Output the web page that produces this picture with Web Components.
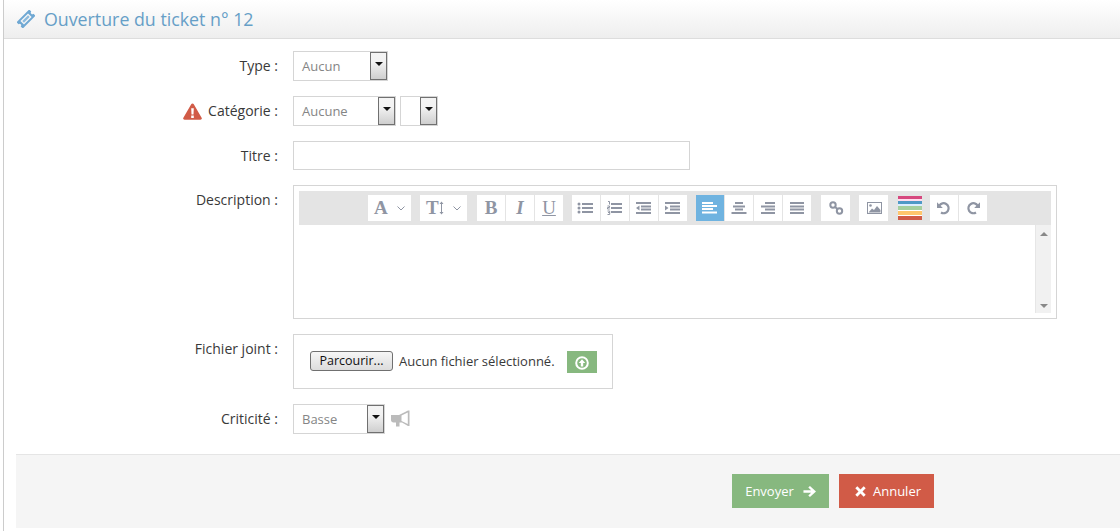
<!DOCTYPE html>
<html lang="fr">
<head>
<meta charset="utf-8">
<title>Ouverture du ticket</title>
<style>
  html, body { margin: 0; background: #fff; }
  body { font-family: "Open Sans", "Liberation Sans", sans-serif; font-size: 14px; color: #393939; }
</style>
</head>
<body>
<ticket-page>
  <page-title slot="title">Ouverture du ticket n° 12</page-title>

  <form-row label="Type :"><select-box width="95" text="Aucun"></select-box></form-row>
  <form-row label="Catégorie :" warn>
    <select-box width="103" text="Aucune"></select-box>
    <select-box width="38"></select-box>
  </form-row>
  <form-row label="Titre :"><text-input></text-input></form-row>
  <form-row label="Description :"><rich-editor></rich-editor></form-row>
  <form-row label="Fichier joint :"><file-box></file-box></form-row>
  <form-row label="Criticité :">
    <select-box width="92" text="Basse"></select-box>
    <svg style="margin:6px 0 0 2px" width="19" height="17" viewBox="0 0 19 17"><path fill="#bbb" fill-rule="evenodd" d="M0 5h8L17 .5h1.500V16H17L11 12.500H8.500V16.500H5V12.500H2.500C1 12.500 0 11.500 0 10zM10.500 5.500v5.500L16.800 14V2.500z"/></svg>
  </form-row>

  <form-actions slot="actions">
    <action-btn color="#87b87f" width="97" style="gap:9px">Envoyer <svg slot="after" width="13" height="13" viewBox="0 0 14 13"><path fill="#fff" d="M7.500.500 14 6.500l-6.500 6-1.800-1.800 3.100-2.900H.500V5.200h8.300L5.700 2.300z"/></svg></action-btn>
    <action-btn color="#d15b47" width="95" style="padding-left:3px"><svg slot="before" width="11" height="11" viewBox="0 0 11 11"><path fill="#fff" d="M2.300.300 5.500 3.500 8.700.300l2 2-3.200 3.200 3.200 3.200-2 2-3.200-3.200-3.200 3.200-2-2 3.200-3.200L.300 2.300z"/></svg>Annuler</action-btn>
  </form-actions>
</ticket-page>

<script>
const GRAY = "#8f95a3";

// icons of the editor toolbar, 28x26 box
const lines = (rows, h = 2) => rows.map(([x, y, w]) => `<rect x="${x}" y="${y}" width="${w}" height="${h}" fill="${GRAY}"/>`).join("");
const TOOL_ICONS = {
  ul: `<circle cx="7" cy="9" r="1.500" fill="${GRAY}"/><circle cx="7" cy="13" r="1.500" fill="${GRAY}"/><circle cx="7" cy="17" r="1.500" fill="${GRAY}"/>` + lines([[10, 8, 11], [10, 12, 11], [10, 16, 11]]),
  ol: `<path fill="none" stroke="${GRAY}" d="M7 6.500h1.500v3M6.500 11h2v1.500h-2v1.500h2.300M6.500 16h2.200v1.500h-1.500h1.500v2h-2.200"/>` + lines([[10, 8, 11], [10, 12, 11], [10, 16, 11]]),
  outdent: lines([[6, 7, 15], [11, 10.500, 10], [11, 13.500, 10], [6, 17, 15]]) + `<path fill="${GRAY}" d="M6 13 9.500 10.500v5z"/>`,
  indent: lines([[6, 7, 15], [11, 10.500, 10], [11, 13.500, 10], [6, 17, 15]]) + `<path fill="${GRAY}" d="M9.500 13 6 10.500v5z"/>`,
  left: `<g fill="#fff"><rect x="6" y="7" width="11" height="2"/><rect x="6" y="10" width="15" height="2"/><rect x="6" y="13" width="11" height="2"/><rect x="6" y="16.500" width="15" height="2"/></g>`,
  center: lines([[10, 7, 8], [8, 10.500, 12], [10, 13.500, 8], [6.500, 17, 15]]),
  right: lines([[11, 7, 10], [7, 10.500, 14], [11, 13.500, 10], [7, 17, 14]]),
  justify: lines([[7, 7, 14], [7, 10.500, 14], [7, 13.500, 14], [7, 17, 14]]),
  link: `<g fill="none" stroke="${GRAY}" stroke-width="2"><circle cx="11" cy="10" r="2.700"/><circle cx="17.500" cy="16" r="2.700"/><path d="M13 12 15.500 14"/></g>`,
  image: `<rect x="7.500" y="7.500" width="14" height="11" fill="none" stroke="${GRAY}"/><path fill="${GRAY}" d="M8.500 17.500 12 13.500l2 1.500 3-4 3.500 4v2.500z"/><circle cx="10.500" cy="10.500" r="1.300" fill="${GRAY}"/>`,
  undo: `<path fill="none" stroke="${GRAY}" stroke-width="2.200" d="M9.300 10.700a5 5 0 1 1 1.700 6.800"/><path fill="${GRAY}" d="M7 7.200v5.800h5.800z"/>`,
  redo: `<path fill="none" stroke="${GRAY}" stroke-width="2.200" d="M18.700 10.700a5 5 0 1 0-1.700 6.800"/><path fill="${GRAY}" d="M21 7.200v5.800h-5.800z"/>`,
};

class TicketPage extends HTMLElement {
  constructor() {
    super();
    this.attachShadow({ mode: "open" }).innerHTML = `
      <style>
        :host { display: block; margin-left: 3px; border-left: 1px solid #ccc; height: 531px; box-sizing: border-box; overflow: hidden; }
        .form { display: flex; flex-direction: column; gap: 15px; padding-top: 12px; }
      </style>
      <slot name="title"></slot>
      <div class="form"><slot></slot></div>
      <slot name="actions"></slot>`;
  }
}

class PageTitle extends HTMLElement {
  constructor() {
    super();
    this.attachShadow({ mode: "open" }).innerHTML = `
      <style>
        :host { display: flex; align-items: center; gap: 9px; height: 38px; box-sizing: content-box; padding-left: 13px;
          border-bottom: 1px solid #ddd; background: linear-gradient(#fff, #eee);
          font-size: 17.800px; color: #669fc7; }
        svg { display: block; }
      </style>
      <svg width="18" height="18" viewBox="0 0 20 20"><g transform="rotate(-45 10 10)">
        <path fill="#6fa8d3" fill-rule="evenodd" d="M0 5h20v3.300a1.700 1.700 0 0 0 0 3.400V15H0v-3.300a1.700 1.700 0 0 0 0-3.400zM4 7.200v5.600h12V7.200z"/>
        <rect x="5.500" y="8.700" width="9" height="2.600" fill="#8dbbdd"/>
      </g></svg>
      <span><slot></slot></span>`;
  }
}

class FormRow extends HTMLElement {
  constructor() {
    super();
    this.attachShadow({ mode: "open" }).innerHTML = `
      <style>
        :host { display: flex; gap: 15px; align-items: flex-start; }
        .label { flex: none; width: 274px; display: flex; justify-content: flex-end; align-items: center; gap: 6px;
          line-height: 20px; padding-top: 5px; color: #393939; }
        svg { display: none; }
        :host([warn]) svg { display: block; }
        .ctl { display: flex; gap: 4px; align-items: flex-start; }
      </style>
      <div class="label"><svg width="19" height="17" viewBox="0 0 19 17"><path fill="#d15b47" d="M9.500.500c.6 0 1 .3 1.300.8l7.800 13.500c.6 1-.1 1.900-1.200 1.900H1.600C.5 16.700-.2 15.800.4 14.800L8.200 1.300c.3-.5.700-.8 1.300-.8z"/><path fill="#fff" d="M8.200 5.200h2.600l-.3 6.300H8.500zM8.200 12.500h2.600v2.400H8.200z"/></svg><span></span></div>
      <div class="ctl"><slot></slot></div>`;
    this.shadowRoot.querySelector("span").textContent = this.getAttribute("label");
  }
}

class SelectBox extends HTMLElement {
  constructor() {
    super();
    this.attachShadow({ mode: "open" }).innerHTML = `
      <style>
        :host { display: flex; justify-content: space-between; align-items: center; box-sizing: border-box; height: 30px;
          border: 1px solid #d5d5d5; background: #fff; font-size: 13px; color: #858585; padding-left: 8px; }
        .arrow { flex: none; box-sizing: border-box; width: 17px; height: 28px; border: 1px solid #707070;
          background: linear-gradient(#f4f4f4, #f2f2f2 35%, #cfcfcf 100%); display: flex; align-items: center; justify-content: center; }
        .arrow i { display: block; margin-top: -4px; border: 4px solid transparent; border-top-color: #111; border-bottom: 0; }
      </style>
      <span></span><div class="arrow"><i></i></div>`;
    this.style.width = this.getAttribute("width") + "px";
    this.shadowRoot.querySelector("span").textContent = this.getAttribute("text") || "";
  }
}

class TextInput extends HTMLElement {
  constructor() {
    super();
    this.attachShadow({ mode: "open" }).innerHTML = `
      <style>:host { display: block; box-sizing: border-box; width: 397px; height: 29px; border: 1px solid #d5d5d5; background: #fff; }</style>`;
  }
}

class ToolBtn extends HTMLElement {
  constructor() {
    super();
    this.attachShadow({ mode: "open" }).innerHTML = `
      <style>
        :host { display: flex; align-items: center; justify-content: center; box-sizing: border-box; width: 28px; height: 26px; margin-right: 1px;
          background: #fff; font-family: "Liberation Serif", serif; font-weight: bold; font-size: 19px; color: ${GRAY}; }
        :host([on]) { background: #6fb3e0; }
        :host([gap]) { margin-right: 9px; }
        :host([wide]) { margin-right: 10px; }
        svg { display: block; }
      </style>
      <slot></slot>`;
    const icon = TOOL_ICONS[this.getAttribute("icon")];
    if (icon) this.shadowRoot.innerHTML += `<svg width="28" height="26" viewBox="0 0 28 26">${icon}</svg>`;
  }
}

class ToolDrop extends HTMLElement {
  constructor() {
    super();
    this.attachShadow({ mode: "open" }).innerHTML = `
      <style>
        :host { display: flex; align-items: center; box-sizing: border-box; height: 26px; margin-right: 9px; padding-left: 6px;
          background: #fff; font-family: "Liberation Serif", serif; font-weight: bold; font-size: 19px; color: ${GRAY}; }
        svg { margin-left: auto; margin-right: 6px; }
      </style>
      <slot></slot>
      <svg width="8" height="5" viewBox="0 0 8 5"><path fill="none" stroke="${GRAY}" d="M.5.500 4 4 7.500.500"/></svg>`;
    this.style.width = this.getAttribute("width") + "px";
  }
}

class RichEditor extends HTMLElement {
  constructor() {
    super();
    this.attachShadow({ mode: "open" }).innerHTML = `
      <style>
        :host { display: block; box-sizing: border-box; width: 764px; height: 134px; border: 1px solid #d5d5d5; padding: 5px; background: #fff; }
        .bar { display: flex; justify-content: center; align-items: center; height: 34px; padding-left: 6px; box-sizing: border-box; background: #e4e4e4; }
        .body { display: flex; justify-content: flex-end; height: 88px; }
        .scroll { width: 16px; background: #f1f1f1; border-left: 1px solid #e6e6e6; box-sizing: border-box; display: flex; flex-direction: column; justify-content: space-between; align-items: center; padding: 7px 0 5px; }
        .scroll i { display: block; border: 4px solid transparent; }
        .scroll i:first-child { border-bottom: 4px solid #888; border-top: 0; }
        .scroll i:last-child { border-top: 4px solid #888; border-bottom: 0; }
        .colors { display: flex; flex-direction: column; width: 24px; height: 24px; margin-right: 8px; }
        .colors b { display: block; }
        tool-drop svg { display: block; }
      </style>
      <div class="bar">
        <tool-drop width="43">A</tool-drop>
        <tool-drop width="47" style="margin-right:10px">T<svg width="5" height="14" viewBox="0 0 5 14" style="margin:0"><path fill="${GRAY}" d="M2 3H.5L2.500.500 4.500 3H3v8h1.500l-2 2.500-2-2.500H2z"/></svg></tool-drop>
        <tool-btn>B</tool-btn>
        <tool-btn style="font-style:italic">I</tool-btn>
        <tool-btn gap style="text-decoration:underline;font-weight:normal">U</tool-btn>
        <tool-btn icon="ul"></tool-btn>
        <tool-btn icon="ol"></tool-btn>
        <tool-btn icon="outdent"></tool-btn>
        <tool-btn icon="indent" gap></tool-btn>
        <tool-btn icon="left" on></tool-btn>
        <tool-btn icon="center"></tool-btn>
        <tool-btn icon="right"></tool-btn>
        <tool-btn icon="justify" wide></tool-btn>
        <tool-btn icon="link" gap style="width:29px"></tool-btn>
        <tool-btn icon="image" wide style="width:29px"></tool-btn>
        <div class="colors">
          <b style="height:3px;background:#d6487e"></b><b style="height:2px;background:#fde"></b>
          <b style="height:3px;background:#4f99c6"></b><b style="height:2px;background:#def"></b>
          <b style="height:4px;background:#a5cf9e"></b><b style="height:1px;background:#fff"></b>
          <b style="height:4px;background:#ffc66d"></b><b style="height:1px;background:#fff"></b>
          <b style="height:4px;background:#d15b47"></b>
        </div>
        <tool-btn icon="undo"></tool-btn>
        <tool-btn icon="redo"></tool-btn>
      </div>
      <div class="body"><div class="scroll"><i></i><i></i></div></div>`;
  }
}

class FileBox extends HTMLElement {
  constructor() {
    super();
    this.attachShadow({ mode: "open" }).innerHTML = `
      <style>
        :host { display: flex; align-items: flex-start; box-sizing: border-box; width: 320px; height: 55px; border: 1px solid #d5d5d5; padding: 16px 0 0 16px; font-size: 13px; color: #393939; }
        .pick { box-sizing: border-box; width: 83px; height: 20px; border: 1px solid #707070; border-radius: 3px;
          background: linear-gradient(#f6f6f6, #dcdcdc); color: #111; text-align: center; line-height: 18px; font-size: 12.500px; }
        .txt { margin-left: 6px; line-height: 20px; width: 168px; white-space: nowrap; }
        .up { width: 30px; height: 22px; background: #87b87f; display: flex; align-items: center; justify-content: center; }
        svg { display: block; margin-top: 2px; }
      </style>
      <div class="pick">Parcourir...</div>
      <div class="txt">Aucun fichier sélectionné.</div>
      <div class="up"><svg width="14" height="14" viewBox="0 0 14 14"><circle cx="7" cy="7" r="5.800" fill="none" stroke="#fff" stroke-width="2"/><path fill="#fff" d="M7 3.200 10.300 7H8.200v3.400H5.800V7H3.700z"/></svg></div>`;
  }
}

class FormActions extends HTMLElement {
  constructor() {
    super();
    this.attachShadow({ mode: "open" }).innerHTML = `
      <style>
        :host { display: flex; gap: 10px; align-items: flex-start; box-sizing: border-box; height: 74px; margin: 20px 0 0 12px;
          padding: 19px 0 0 716px; border-top: 1px solid #e5e5e5; background: #f5f5f5; }
      </style>
      <slot></slot>`;
  }
}

class ActionBtn extends HTMLElement {
  constructor() {
    super();
    this.attachShadow({ mode: "open" }).innerHTML = `
      <style>
        :host { display: flex; align-items: center; justify-content: center; gap: 7px; box-sizing: border-box; height: 34px; color: #fff; font-size: 13px; }
        ::slotted(svg) { display: block; }
      </style>
      <slot name="before"></slot><span><slot></slot></span><slot name="after"></slot>`;
    this.style.width = this.getAttribute("width") + "px";
    this.style.background = this.getAttribute("color");
  }
}

customElements.define("ticket-page", TicketPage);
customElements.define("page-title", PageTitle);
customElements.define("form-row", FormRow);
customElements.define("select-box", SelectBox);
customElements.define("text-input", TextInput);
customElements.define("tool-btn", ToolBtn);
customElements.define("tool-drop", ToolDrop);
customElements.define("rich-editor", RichEditor);
customElements.define("file-box", FileBox);
customElements.define("form-actions", FormActions);
customElements.define("action-btn", ActionBtn);
</script>
</body>
</html>
